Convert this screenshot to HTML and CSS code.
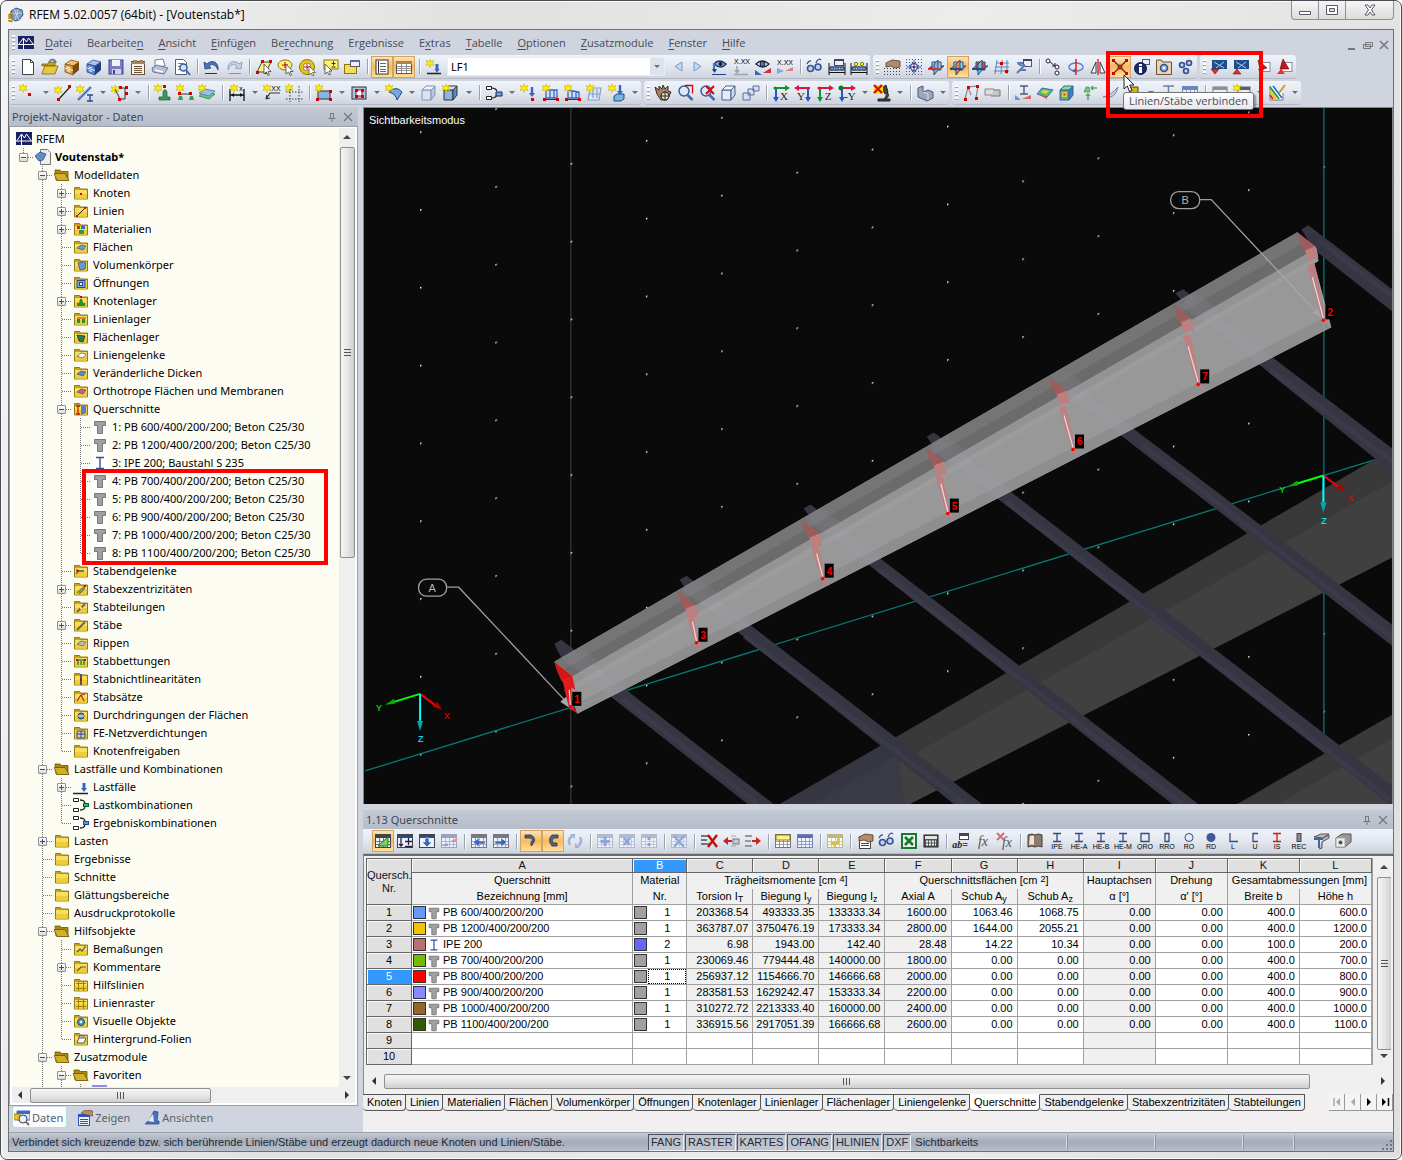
FILE: index.html
```html
<!DOCTYPE html>
<html lang="de">
<head>
<meta charset="utf-8">
<title>RFEM 5.02.0057 (64bit) - [Voutenstab*]</title>
<link rel="stylesheet" href="styles.css">
</head>
<body>
<div class="window">
  <header class="titlebar">
    <svg class="app-icon" viewBox="0 0 16 16"><path d="M3 4l5-3 6 2 1 5-4 5-4 1-4-4z" fill="#7d9cc0" stroke="#3e5878"/><path d="M6 2l5 11M3 7l11-1M10 2L7 13" stroke="#dbe6f2" stroke-width=".7" fill="none"/><text x="0" y="15" font-size="10" font-weight="bold" fill="#d8a800" stroke="#5c4800" stroke-width=".3">5</text></svg>
    <h1>RFEM 5.02.0057 (64bit) - [Voutenstab*]</h1>
    <div class="win-controls">
      <button aria-label="Minimieren"><svg viewBox="0 0 14 12"><path d="M1.500 7.500h11v3h-11z" fill="#fff" stroke="#555b66"/></svg></button>
      <button aria-label="Maximieren"><svg viewBox="0 0 14 12"><path d="M1.500 1.500h11v9h-11z" fill="#fff" stroke="#555b66"/><path d="M4.500 4.500h5v3h-5z" fill="#ddd" stroke="#555b66"/></svg></button>
      <button class="close" aria-label="Schließen"><svg viewBox="0 0 14 12"><path d="M2 1h3l2 3 2-3h3l-3.500 5 3.500 5H9L7 8l-2 3H2l3.500-5z" fill="#fff" stroke="#555b66"/></svg></button>
    </div>
  </header>

  <div class="client">
    <nav class="menubar" aria-label="Menü">
      <span class="grip"></span>
      <svg class="logo" viewBox="0 0 16 13"><path d="M0 0h16v13H0z" fill="#1b2263"/><path d="M0 8.500h16M5.500 2v11M1 8l4.500-6 3 4L10.500 2 15 8" stroke="#fff" fill="none"/></svg>
      <a href="#"><u>D</u>atei</a><a href="#">Bearbeite<u>n</u></a><a href="#"><u>A</u>nsicht</a><a href="#"><u>E</u>infügen</a><a href="#">Be<u>r</u>echnung</a><a href="#">Er<u>g</u>ebnisse</a><a href="#">E<u>x</u>tras</a><a href="#"><u>T</u>abelle</a><a href="#"><u>O</u>ptionen</a><a href="#"><u>Z</u>usatzmodule</a><a href="#"><u>F</u>enster</a><a href="#"><u>H</u>ilfe</a>
      <div class="mdi">
        <button aria-label="Fenster minimieren"><svg viewBox="0 0 10 10"><path d="M1 8h7v2H1z" fill="#777"/></svg></button>
        <button aria-label="Fenster wiederherstellen"><svg viewBox="0 0 10 10"><path d="M2.500 2.500h7v4h-7zM.5 4.500h7v4h-7z" fill="#d0d4de" stroke="#777"/></svg></button>
        <button aria-label="Fenster schließen"><svg viewBox="0 0 10 10"><path d="M1 1l8 8M9 1L1 9" stroke="#777" stroke-width="1.600"/></svg></button>
      </div>
    </nav>
    <div class="toolbars">
      <div class="toolrow" id="row1">
        <div class="toolgroup" data-icons="page open cabo cabb save props print preview | undo redo | selpoly selell selring selbox selwin | *nav *tbl | lf @combo <prev <next eyel xval eyed xdia | glasses mod1 mod2"></div>
        <div class="toolgroup" data-icons="handgrid snap pl1 *pl2 pl3 mesh cfg | copy rot mirr *join info gearbox gears"></div>
        <div class="toolgroup" data-icons="bl1 bl2 rd1 rd2"></div>
      </div>
      <div class="toolrow" id="row2">
        <div class="toolgroup" data-icons="nnode+ nline nmem+ npoly+ | supn supl supf | dim+ dimxx guides | rect+ opening+ shell+ solid solidn+ | combi+ ldn ldl ldm ldf ldv+"></div>
        <div class="toolgroup" data-icons="hand zoomw zoomx cube cubes | vx vy vz vmy+ mic+ | solidg+"></div>
        <div class="toolgroup" data-icons="frame tube | beam surf cubec supg plane starb+ sect tabs | dlg dlgs+ result+"></div>
      </div>
      <div class="tooltip" role="tooltip">Linien/Stäbe verbinden</div>
      <svg class="cursor" viewBox="0 0 12 19"><path d="M1 1v14l3.300-3L6.500 17.500l2.500-1L6.700 11H11z" fill="#fff" stroke="#222"/></svg>
      <div class="mark mark-tool"></div>
    </div>

    <main class="work">
      <aside class="navigator">
        <div class="panel-title"><h2>Projekt-Navigator - Daten</h2>
          <button aria-label="Anheften"><svg viewBox="0 0 10 10"><path d="M3.500 1v5M6.500 1v5M3 1.500h4M1.500 6.500h7M5 7v3" stroke="#777" fill="none"/></svg></button>
          <button aria-label="Schließen"><svg viewBox="0 0 10 10"><path d="M1 1l8 8M9 1L1 9" stroke="#777" stroke-width="1.300"/></svg></button>
        </div>
        <div class="tree-frame">
          <div class="tree-body">
            <ul class="tree" id="tree" role="tree"></ul>
            <div class="vscroll"><i class="up"></i><i class="thumb tree-thumb"></i><i class="down"></i></div>
            <div class="mark mark-tree"></div>
          </div>
          <div class="hscroll"><i class="left"></i><div class="track"><i class="thumb nav-thumb"></i></div><i class="right"></i></div>
        </div>
        <div class="nav-tabs">
          <button class="active"><svg viewBox="0 0 16 16"><path d="M3 1h13v9H3z" fill="#dce9fb" stroke="#3b6cc0"/><path d="M3 1h13v3H3z" fill="#3b6cc0"/><path d="M0 4h6v6H0z" fill="#f0c020" stroke="#907000" stroke-width=".7"/><circle cx="9" cy="9" r="4" fill="#e8f2ff" stroke="#345"/><path d="M12 12l3 3" stroke="#a5622a" stroke-width="2"/></svg>Daten</button>
          <button><svg viewBox="0 0 16 16"><path d="M1.500 4.500h11v11h-11z" fill="#eaf1ff" stroke="#2a55b5"/><path d="M1 4h12v3H1z" fill="#2a55b5"/><path d="M3 9.500h8M3 11.500h8M3 13.500h8" stroke="#2a55b5"/><path d="M4 3l4-3 8 1v5l-6-1z" fill="#b98b62" stroke="#5a4030" stroke-width=".6"/></svg>Zeigen</button>
          <button><svg viewBox="0 0 16 16"><path d="M10 1l4 1-1 9h2v3H1l5-5z" fill="#4a6fc4" stroke="#22418a" stroke-width=".7"/><path d="M9 4l-5 7 6 1z" fill="#e4ecfb"/></svg>Ansichten</button>
        </div>
      </aside>

      <div class="right">
        <section class="viewport" aria-label="Modellansicht">
          <svg viewBox="364 108 1028 695" preserveAspectRatio="xMinYMin slice" id="scene">
            <defs>
              <pattern id="dots" width="75.170" height="77.700" patternUnits="userSpaceOnUse" patternTransform="matrix(1 -.3059 0 1 420 520)"><path d="M0 0h1.400v1.400H0z" fill="#fff"/></pattern>
              <clipPath id="beamShape"><path d="M554 661L1296 232l19 16 2 12-4 3 17 64L577 713l-7-20-8-14z"/></clipPath>
              <linearGradient id="leadB" gradientUnits="userSpaceOnUse" x1="1199" y1="199" x2="1322" y2="320"><stop offset=".5" stop-color="#a0a0a0"/><stop offset=".8" stop-color="#a8a8ac"/><stop offset="1" stop-color="#9c9ca4"/></linearGradient>
            </defs>
            <path d="M364 108h1028v695H364z" fill="#0a0a0a"/>
            <path d="M570.500 108v695" stroke="#303030" stroke-width="1.500"/>
            <path d="M364 108h1028v695H364z" fill="url(#dots)"/>
            <g stroke="#087878" stroke-width="1.300"><path d="M365 770L1374 459"/><path d="M1322.500 108v626"/></g>
            <path d="M780 803L1392 448v108L909 803z" fill="#393939"/>
            <path d="M826 803L1392 480v76L909 803z" fill="#404040"/>
            <path d="M779 803l116-67 4 34 5 33z" fill="#363542"/>
            <path d="M812 803l86-50 1 17 5 33z" fill="#3a3946"/>
            <path d="M1236 803l156-90v90z" fill="#393939"/><path d="M1276 803l116-66v66z" fill="#404040"/>
            <g fill="#363542">
              <path d="M554 643l7-4L773 803h-26L561 657z"/><path d="M679 579l7-4 295 228h-28L688 592z"/><path d="M803 508l7-4 387 299h-26L812 520z"/>
              <path d="M926 436l7-4 459 354v17h-4L935 450z"/><path d="M1050 375l7-4 335 254v21L1062 390z"/><path d="M1174 293l8-4 210 160v24L1186 306z"/><path d="M1300 229l7-4 85 65v22l-80-63z"/>
            </g>
            <g stroke="#3b3a49" stroke-width="5"><path d="M622 698L757 803M744 635L964 803M877 568L1181 803M1005 501L1389 799M1141 444l251 194M1268 369l124 93M1318 241l74 56"/></g>
            <g opacity=".94">
              <path d="M554 661L1296 232l19 16 2 12-4 3 17 64L577 713l-7-20-8-14z" fill="#a1a1a1"/>
              <path d="M554 661L1296 232l19 16L573 675z" fill="#7c7c7c"/>
              <path d="M564 668L1306 240l9 8L573 675z" fill="#727272"/>
              <path d="M573 675L1315 248l2 9L575 685z" fill="#9c9c9c"/>
              <path d="M574 683L1316 256l1 5L575 689z" fill="#a6a6a6"/>
              <path d="M574 704L1322 318l8 9L577 713z" fill="#979797"/>
            </g>
            <g clip-path="url(#beamShape)" fill="none" stroke="#9a9ab4" stroke-width="20" opacity=".13"><path d="M562 645l140 109M688 582l140 108M812 512l140 108M935 440l140 108M1062 380l140 108M1186 298l140 108"/></g>
            <g class="ribs" id="ribs"></g>
            <g fill="none" stroke="#a0a0a0" stroke-width="1.300"><rect x="418.500" y="578.500" width="28" height="17" rx="8"/><path d="M447 586.500h11.500L566 701"/><rect x="1169.500" y="191.500" width="29" height="17" rx="8"/><path d="M1199 199.500h11L1320 317" stroke="url(#leadB)"/></g>
            <path d="M569 707l-9-6 6-5z" fill="#a8a8a8"/><path d="M1320 317l-9-4 5-5z" fill="#a2a2aa"/>
            <g id="nodes"></g>
            <g class="axis-labels" text-anchor="middle"><text x="432" y="591" fill="#b4b4bc">A</text><text x="1184" y="204" fill="#b4b4bc">B</text></g>
            <g id="triads"></g>
            <text x="369" y="124" fill="#fff" font-size="11">Sichtbarkeitsmodus</text>
          </svg>
        </section>

        <section class="sheet-panel">
          <div class="panel-title"><h2>1.13 Querschnitte</h2>
            <button aria-label="Anheften"><svg viewBox="0 0 10 10"><path d="M3.500 1v5M6.500 1v5M3 1.500h4M1.500 6.500h7M5 7v3" stroke="#777" fill="none"/></svg></button>
            <button aria-label="Schließen"><svg viewBox="0 0 10 10"><path d="M1 1l8 8M9 1L1 9" stroke="#777" stroke-width="1.300"/></svg></button>
          </div>
          <div class="toolgroup sheet-tools" data-icons="*g1 g2 g3 g4 | g5 g6 | *g7 *g8 g9 | g10 g11 g12 | g13 | g14 g15 g16 | g17 g18 | g19 | g20 glasses excel calc | abeq fx fxx | book IPE HE-A HE-B HE-M QRO RRO RO RD L U IS REC lib1 lib2"></div>
          <div class="sheet-area">
            <div class="sheet-row">
              <table class="sheet">
                <colgroup><col class="w-no"><col class="w-a"><col class="w-b"><col class="w-c"><col class="w-c"><col class="w-c"><col class="w-c"><col class="w-c"><col class="w-c"><col class="w-i"><col class="w-i"><col class="w-i"><col class="w-i"></colgroup>
                <thead>
                  <tr class="letters"><th rowspan="3" class="corner">Quersch.<br>Nr.</th><th>A</th><th class="sel">B</th><th>C</th><th>D</th><th>E</th><th>F</th><th>G</th><th>H</th><th>I</th><th>J</th><th>K</th><th>L</th></tr>
                  <tr class="names"><th>Querschnitt</th><th>Material</th><th colspan="3">Trägheitsmomente [cm <sup>4</sup>]</th><th colspan="3">Querschnittsflächen [cm <sup>2</sup>]</th><th>Hauptachsen</th><th>Drehung</th><th colspan="2">Gesamtabmessungen [mm]</th></tr>
                  <tr class="names units"><th>Bezeichnung [mm]</th><th>Nr.</th><th>Torsion I<sub>T</sub></th><th>Biegung I<sub>y</sub></th><th>Biegung I<sub>z</sub></th><th>Axial A</th><th>Schub A<sub>y</sub></th><th>Schub A<sub>z</sub></th><th>α [°]</th><th>α' [°]</th><th>Breite b</th><th>Höhe h</th></tr>
                </thead>
                <tbody id="rows"></tbody>
              </table>
              <div class="vscroll"><i class="up"></i><i class="thumb sheet-thumb"></i><i class="down"></i></div>
            </div>
            <div class="hscroll"><i class="left"></i><div class="track"><i class="thumb wide-thumb"></i></div><i class="right"></i></div>
          </div>
          <div class="sheet-tabs">
            <button>Knoten</button><button>Linien</button><button>Materialien</button><button>Flächen</button><button>Volumenkörper</button><button>Öffnungen</button><button>Knotenlager</button><button>Linienlager</button><button>Flächenlager</button><button>Liniengelenke</button><button class="active">Querschnitte</button><button>Stabendgelenke</button><button>Stabexzentrizitäten</button><button>Stabteilungen</button>
            <div class="tab-nav">
              <button aria-label="Erste"><svg viewBox="0 0 10 10"><path d="M2 1v8" stroke="#aaa" stroke-width="1.500"/><path d="M8 1v8L4 5z" fill="#aaa"/></svg></button><button aria-label="Zurück"><svg viewBox="0 0 10 10"><path d="M7 1v8L3 5z" fill="#aaa"/></svg></button><button aria-label="Weiter"><svg viewBox="0 0 10 10"><path d="M3 1v8l4-4z"/></svg></button><button aria-label="Letzte"><svg viewBox="0 0 10 10"><path d="M8.500 1v8" stroke="#000" stroke-width="1.500"/><path d="M2 1v8l4-4z"/></svg></button>
            </div>
          </div>
        </section>
      </div>
    </main>

    <footer class="statusbar">
      <p class="hint">Verbindet sich kreuzende bzw. sich berührende Linien/Stäbe und erzeugt dadurch neue Knoten und Linien/Stäbe.</p>
      <button>FANG</button><button>RASTER</button><button>KARTES</button><button>OFANG</button><button>HLINIEN</button><button>DXF</button>
      <span class="mode">Sichtbarkeits</span><span class="slot"></span><span class="slot"></span><span class="slot slot-small"></span><span class="slot"></span>
      <svg class="resize" viewBox="0 0 10 10"><path d="M8 0h2v2H8zM8 4h2v2H8zM4 4h2v2H4zM8 8h2v2H8zM4 8h2v2H4zM0 8h2v2H0z" fill="#6d7480"/></svg>
    </footer>
  </div>
</div>
<script src="app.js"></script>
</body>
</html>
```
FILE: styles.css
```css
* { box-sizing: border-box; }
body { margin: 0; font: 11px/16px "Liberation Sans", Arial, sans-serif; color: #000; background: #fff; }
button { margin: 0; padding: 0; border: 0; background: none; font: inherit; color: inherit; }
h1, h2, p, ul { margin: 0; padding: 0; font-weight: normal; }
svg { display: block; flex: none; }

.window { display: flex; flex-direction: column; height: 100vh; min-height: 700px; padding: 0 7px 7px; border: 1px solid #4a4e54; border-radius: 7px; background: linear-gradient(100deg, #f4f4f4, #e2e0e0 30%, #ececec 60%, #dfdfdf); box-shadow: inset 0 0 0 1px #fafafa; overflow: hidden; }
.titlebar { display: flex; align-items: center; height: 28px; flex: none; gap: 5px; }
.titlebar h1 { flex: 1; font: 12px/28px "Open Sans", "Noto Sans", sans-serif; }
.app-icon { width: 16px; height: 16px; }
.win-controls { display: flex; align-self: flex-start; height: 19px; border: 1px solid #8a8e96; border-top: 0; border-radius: 0 0 4px 4px; background: linear-gradient(#f6f6f6, #dcdcdc); }
.win-controls button { display: grid; place-items: center; width: 27px; border-right: 1px solid #8a8e96; }
.win-controls .close { width: 47px; border-right: 0; }
.win-controls svg { width: 14px; height: 12px; }

.client { display: flex; flex-direction: column; flex: 1; min-height: 0; border: 1px solid #6c7178; background: #d0d4de; }
.menubar { display: flex; align-items: center; height: 25px; flex: none; font: 11px/16px "Open Sans", "Noto Sans", sans-serif; color: #444b57; }
.menubar a { color: inherit; text-decoration: none; margin-right: 15px; white-space: nowrap; }
.menubar u { text-underline-offset: 2px; }
.menubar .logo { width: 16px; height: 13px; margin: 0 11px 0 1px; }
.mdi { display: flex; gap: 6px; margin-left: auto; padding: 4px 4px 0 0; }
.mdi svg { width: 10px; height: 10px; }

.grip { width: 3px; height: 16px; margin: 0 2px 0 3px; flex: none; background: repeating-linear-gradient(#fff 0 2px, #9aa0ac 2px 3px, transparent 3px 4px); }
.toolbars { position: relative; display: flex; flex-direction: column; gap: 2px; flex: none; padding-bottom: 2px; }
.toolrow { display: flex; gap: 3px; height: 24px; }
.toolgroup { display: flex; align-items: center; flex: none; height: 24px; border-radius: 3px; background: linear-gradient(#f0f3f9, #e2e7f0 50%, #cfd3dd); border-bottom: 1px solid #b4b9c4; }
.tool { display: grid; place-items: center; flex: none; width: 22px; height: 22px; border: 1px solid transparent; }
.tool svg { width: 18px; height: 18px; }
.tool.slim { width: 20px; }
.tool.on { border-color: #cfa566; background: linear-gradient(#fde3b5, #fbb75e 50%, #fde09a); }
.drop { width: 13px; height: 20px; flex: none; display: grid; place-items: center; }
.drop::after, .combo::after { content: ""; border: 3px solid transparent; border-top-color: #6a6f78; border-bottom: 0; }
.sep { width: 1px; height: 15px; margin: 0 3px 0 4px; background: #9ba1ad; box-shadow: 1px 0 #fff; flex: none; }
.combo { position: relative; width: 218px; height: 19px; margin: 0 3px 0 2px; flex: none; }
.combo select { width: 100%; height: 100%; border: 1px solid #e8ecf4; background: #fff; appearance: none; padding: 0 3px; font: 11px "Noto Sans", sans-serif; color: #000; }
.combo::before { content: ""; position: absolute; right: 1px; top: 1px; width: 14px; height: 17px; background: #dde2ec; }
.combo::after { position: absolute; right: 5px; top: 8px; }

.tooltip { position: absolute; left: 1114px; top: 37px; padding: 0 5px; border: 1px solid #767676; border-radius: 3px; background: linear-gradient(#fff, #e6e8f2); font: 11px/16px "Open Sans", "Noto Sans", sans-serif; color: #4c4c4c; box-shadow: 2px 2px 2px #0005; white-space: nowrap; }
.cursor { position: absolute; left: 1114px; top: 19px; width: 12px; height: 19px; }
.mark { position: absolute; border: 4px solid #f00; pointer-events: none; }
.mark-tool { left: 1097px; top: -4px; width: 157px; height: 67px; z-index: 2; }
.mark-tree { left: 70px; top: 341px; width: 246px; height: 96px; }

.work { display: flex; gap: 5px; flex: 1; min-height: 0; }
.navigator { display: flex; flex-direction: column; flex: 0 0 349px; min-height: 0; }
.panel-title { display: flex; align-items: center; gap: 6px; height: 19px; flex: none; padding: 0 5px 0 3px; background: linear-gradient(#c4cad4, #b6bdc9); }
.panel-title h2 { flex: 1; font: 11px/18px "Noto Sans", "Open Sans", sans-serif; color: #3f4650; }
.panel-title svg { width: 10px; height: 10px; }
.tree-frame { flex: 1; min-height: 0; display: flex; flex-direction: column; padding: 1px 2px 2px; border: 1px solid #9aa0aa; background: #fff; }
.tree-body { position: relative; flex: 1; min-height: 0; display: flex; background: #fcfcf3; }
.tree { flex: 1; list-style: none; padding: 2px 0 0 2px; overflow: hidden; font: 11px/18px "Noto Sans", "Open Sans", sans-serif; }
.tree li { display: flex; align-items: center; height: 18px; white-space: nowrap; }
.tree li.bold { font-weight: bold; }
.tree .icon { width: 16px; height: 16px; margin: 0 4px 0 2px; }
.tree .white { background: #fff; }
.g { position: relative; width: 19px; height: 18px; flex: none; background-repeat: no-repeat; }
.g.line { background-image: repeating-linear-gradient(#777 0 1px, transparent 1px 2px); background-size: 1px 18px; background-position: 9px 0; }
.g.half { background-image: repeating-linear-gradient(#777 0 1px, transparent 1px 2px); background-size: 1px 10px; background-position: 9px 0; }
.g.elbow::before { content: ""; position: absolute; left: 10px; top: 9px; width: 9px; height: 1px; background: repeating-linear-gradient(90deg, #777 0 1px, transparent 1px 2px); }
.box { position: absolute; left: 5px; top: 5px; width: 9px; height: 9px; border: 1px solid #919191; border-radius: 1px; background: linear-gradient(90deg, #2e4c9c, #2e4c9c) center / 5px 1px no-repeat, linear-gradient(#fff, #dcdcdc); }
.box.plus { background: linear-gradient(#2e4c9c, #2e4c9c) center / 5px 1px no-repeat, linear-gradient(#2e4c9c, #2e4c9c) center / 1px 5px no-repeat, linear-gradient(#fff, #dcdcdc); }

.vscroll { position: relative; display: flex; flex-direction: column; align-items: center; width: 16px; flex: none; background: #efeff0; padding: 7px 0; }
.vscroll i, .hscroll i { display: block; flex: none; }
.up { border: 4px solid transparent; border-bottom-color: #444; border-top: 0; }
.down { border: 4px solid transparent; border-top-color: #444; border-bottom: 0; margin-top: auto; }
.left { border: 4px solid transparent; border-right-color: #333; border-left: 0; }
.hscroll .right { border: 4px solid transparent; border-left-color: #333; border-right: 0; }
.thumb { position: relative; border: 1px solid #8f8f92; border-radius: 2px; background: linear-gradient(90deg, #f5f5f5, #e6e6e7 50%, #cfcfd2); }
.vscroll .thumb { width: 15px; margin-top: 8px; }
.tree-thumb { height: 411px; }
.sheet-thumb { height: 173px; }
.thumb::after { content: ""; position: absolute; left: 3px; top: 50%; width: 7px; height: 7px; margin-top: -4px; background: repeating-linear-gradient(#555 0 1px, transparent 1px 3px); }
.hscroll { display: flex; align-items: center; height: 16px; flex: none; padding: 0 6px; background: #efeff0; }
.track { flex: 1; margin: 0 12px 0 8px; }
.hscroll .thumb { height: 15px; background: linear-gradient(#f5f5f5, #e6e6e7 50%, #cfcfd2); }
.hscroll .thumb::after { left: 50%; top: 3px; margin: 0 0 0 -4px; width: 8px; background: repeating-linear-gradient(90deg, #555 0 1px, transparent 1px 3px); }
.nav-thumb { width: 181px; }
.wide-thumb { width: 94%; }
.nav-tabs { display: flex; gap: 8px; height: 26px; flex: none; padding: 1px 0 4px 3px; font: 11px/16px "Noto Sans", "Open Sans", sans-serif; color: #59606c; }
.nav-tabs button { display: flex; align-items: center; gap: 2px; padding: 0 3px 0 1px; border: 1px solid transparent; border-radius: 3px; }
.nav-tabs .active { background: #fafbfd; border-color: #b7dde0; border-top-color: #fff; }
.nav-tabs svg { width: 16px; height: 16px; }

div.right { display: flex; flex-direction: column; flex: 1; min-width: 0; }
.viewport { flex: 1; min-height: 0; border: 1px solid #82868e; border-width: 1px 1px 0; background: #0a0a0a; overflow: hidden; }
.viewport svg { width: 100%; height: 100%; }
.viewport .node-label { font-weight: bold; font-size: 10px; fill: #f00; }
.sheet-panel { flex: none; margin-top: 6px; padding-bottom: 21px; background: #f1efef; }
.sheet-tools { padding-left: 9px; border-radius: 0; height: 25px; }
.tool text { font: 7px "Liberation Sans", Arial, sans-serif; text-anchor: middle; fill: #000; }
.tool text.big { font: italic 14px "Liberation Serif", serif; fill: #555; }
.tool text.mid { font: bold italic 10px "Liberation Serif", serif; fill: #222; }
.tool text.view { font: 11px "Liberation Serif", serif; fill: #223; }
.sheet-area { border-top: 2px solid #6a6a6a; border-left: 1px solid #8a8a8a; background: #f0f0f0; padding: 2px 2px 5px; }
.sheet-row { display: flex; gap: 3px; overflow: hidden; margin-bottom: 8px; }
.sheet { flex: none; width: 1007px; table-layout: fixed; border-collapse: separate; border-spacing: 0; border-right: 1px solid #a0a0a0; }
.w-no { width: 46px; } .w-a { width: 221px; } .w-b { width: 54px; } .w-c { width: 66px; } .w-i { width: 72px; }
.sheet th, .sheet td { height: 16px; padding: 0; font-weight: normal; line-height: 15px; white-space: nowrap; }
.sheet .letters th { height: 15px; line-height: 13px; background: #e0e0e0; border: 1px solid #666; border-width: 1px 1px 1px 0; box-shadow: inset 1px 1px #f8f8f8; color: #112; }
.sheet .letters .sel { background: #3399ff; color: #fff; }
.sheet .letters .corner { border-left: 1px solid #666; line-height: 13px; }
.sheet .names th { background: #f0f0f0; border-right: 1px solid #a0a0a0; line-height: 14px; vertical-align: top; }
.sheet .units th { border-bottom: 1px solid #a0a0a0; }
.sheet sup, .sheet sub { font-size: 9px; line-height: 0; }
.sheet sup { vertical-align: 2px; }
.sheet sub { vertical-align: -2px; }
.sheet tbody th { background: #e0e0e0; border: 1px solid #666; border-top: 0; box-shadow: inset 1px 1px #fafafa; }
.sheet tbody th.sel { background: #3399ff; color: #fff; }
.sheet td { background: #fff; border-right: 1px solid #a0a0a0; border-bottom: 1px solid #a0a0a0; text-align: right; padding-right: 4px; }
.sheet td.calc { background: #f0f0f0; }
.sheet td.name, .sheet td.mat { padding: 0; }
.cell { display: flex; align-items: center; height: 15px; }
.cell i { width: 13px; height: 13px; margin: 0 1px; border: 1px solid #333; flex: none; }
.cell svg { width: 14px; height: 14px; margin-right: 2px; }
.cell span { flex: 1; text-align: left; }
.mat .cell span { text-align: center; height: 15px; }
.mat .cell .focus { outline: 1px dotted #000; outline-offset: -1px; }

.sheet-tabs { display: flex; height: 17px; }
.sheet-tabs > button { border: 1px solid #555; border-left: 0; border-radius: 0 0 4px 4px; background: #efefef; padding: 0 3px 0 4px; line-height: 15px; white-space: nowrap; }
.sheet-tabs > .active { background: #fff; border-top-color: #fff; }
.tab-nav { display: flex; margin-left: auto; }
.tab-nav button { display: grid; place-items: center; width: 16px; border: 1px solid #999; border-width: 0 1px 1px 0; background: #f4f4f4; }
.tab-nav svg { width: 10px; height: 10px; }

.statusbar { display: flex; align-items: center; gap: 1px; height: 19px; flex: none; border-top: 1px solid #9aa0ab; background: linear-gradient(#c6cad2, #a4abb8 50%, #b9bec9); color: #222b3a; }
.statusbar .hint { width: 638px; flex: none; padding-left: 3px; line-height: 18px; white-space: nowrap; }
.statusbar button { height: 17px; padding: 0 2px; border: 1px solid #eef0f4; border-top-color: #4a505c; border-left-color: #4a505c; background: #c0c4cd; line-height: 14px; }
.statusbar .mode { flex: 1; padding-left: 3px; }
.slot { width: 87px; height: 15px; border-left: 1px solid #8d94a0; box-shadow: -1px 0 #d8dbe2; }
.slot-small { width: 50px; }
.resize { width: 10px; height: 10px; align-self: flex-end; margin: 0 1px 1px 0; }
```
FILE: app.js
```js
// Small SVG drawing helpers; every tool icon is drawn on an 18 x 18 grid.
const P = (d, fill = 'none', stroke = 'none', w = 1) => `<path d="${d}" fill="${fill}" stroke="${stroke}" stroke-width="${w}"/>`;
const R = (x, y, w, h, fill, stroke = 'none') => `<rect x="${x}" y="${y}" width="${w}" height="${h}" fill="${fill}" stroke="${stroke}"/>`;
const C = (x, y, r, fill, stroke = 'none', w = 1) => `<circle cx="${x}" cy="${y}" r="${r}" fill="${fill}" stroke="${stroke}" stroke-width="${w}"/>`;
const T = (x, y, s, cls = '') => `<text x="${x}" y="${y}" class="${cls}">${s}</text>`;
const N = (...pts) => pts.map(([x, y]) => R(x, y, 3, 3, '#d40000')).join('');
const starAt = (x, y) => P(`M${x + 4} ${y}l1 2.500 3-1-1.500 2.500 1.500 2.500-3-.8-1 2.800-1-2.800-3 .8 1.500-2.500-1.500-2.500 3 1z`, '#fff000', '#c0a400', .5);
const star = starAt(0, 0);
const cur = P('M9 6v10l2.500-2 1.500 3.500 1.500-.7-1.500-3.300h3z', '#fff', '#444', .8);
const dd = '#27488c';
const grid = (c = '#777', body = '#eef2fa') => R(1.5, 2.5, 15, 13, body, c) + P('M1 3h16v3H1z', c) + P('M1 9.500h16M1 12.500h16M5.500 3v13M9.500 3v13M13.500 3v13', 'none', c, .7);
const cab = (a, b, c) => P('M2 6l6-4 8 2-6 4z', a, c, .7) + P('M10 8l6-4v8l-6 5z', c) + P('M2 6l8 2v9l-8-3z', b, c, .7) + P('M2 10l8 2.500M4 9l3 1M4 12.500l3 1', 'none', '#fff', .9);
const planes = (hot) => P('M1 11l4-3h12l-4 3z', hot === 0 ? '#e03020' : '#a9cbe8', '#20507c') + P('M5 4h9v8H5z', hot === 2 ? '#e84040' : '#a9cbe8', '#20507c') + P('M7 6l4-4v10l-4 5z', hot === 1 ? '#ef7c5a' : '#7db3de', '#20507c') + P('M1 11h12', 'none', hot === 0 ? '#e03020' : '#20507c', 2);
const mag = C(8, 7, 5, '#dbe8fa', '#3c5c98', 1.5) + P('M11.500 11l5 5', 'none', '#4468b0', 2.5);
const cube = (a, b, c, s) => P('M2 6h9v10H2z', a, s) + P('M2 6l4-4h9l-4 4z', b, s) + P('M11 6l4-4v9l-4 5z', c, s);
const glass = P('M1 6c2-4 3-3 4-3M10 5c2-5 4-4 5-3', 'none', '#39538f', 1.3) + C(4.5, 10.5, 3, '#bcd0f0', '#39538f', 1.6) + C(12, 9, 3, '#bcd0f0', '#39538f', 1.6);
const hand = P('M3 5l6-3 8 1v6l-5 1-4-2-5 1z', '#b58a66', '#4d3a2c', .8);
const truss = P('M1 14.500h16M2 9h14v3H2z', '#cfe0f8', '#111') + C(4, 10.5, 1.6, '#7aa6e8', dd) + C(9, 10.5, 1.6, '#7aa6e8', dd) + C(14, 10.5, 1.6, '#7aa6e8', dd) + P('M1 5v12M17 5v12', 'none', '#111');
const eye = P('M2 6q6-6 13 0q-6 6-13 0z', '#fff', '#223', 1.3) + C(8.5, 6, 2.5, '#3c74c8', '#123');
const view = (s, a, b, c) => P('M3 4h11', 'none', a, 1.8) + P('M13 1l5 3-5 3z', a) + P('M4 5v9', 'none', b, 2) + P('M1 13l3 5 3-5z', b) + T(12, 16, s, 'view') + C(3, 4, 1.5, c);
const boxes = P('M1.500 2.500h5v3h-5zM1.500 12.500h5v3h-5z', '#fff', '#222') + P('M7 4c3 0 4 1 5 3M7 14c3 0 4-1 5-3', 'none', '#222', 1.2);
const prof = (shape, label, c = '#3a4a80') => P(shape, 'none', c, 1.3) + T(9, 17, label);
const gear = (x, y, r) => C(x, y, r, '#9db8e4', '#39538f', 1.6) + C(x, y, r / 3, '#fff');
const smallI = 'M5 1.500h8M9 1.500v8M5 9.500h8';

const ICONS = {
  page: P('M3.500 1.500h8l3 3v12h-11z', '#fff', '#444') + P('M11.500 1.500v3h3', 'none', '#444'),
  open: P('M1 6h6l1-2h6v4H1z', '#c9a020', '#6d5600', .7) + P('M1 15L4 8h13l-3 8H1z', '#e8c840', '#6d5600', .7) + P('M8 4c2-4 6-3 7 1', 'none', '#4a74b0', 1.6),
  cabo: cab('#f2bd70', '#e0a04a', '#7a4a10'), cabb: cab('#a9c4f0', '#5f88d4', '#203e80'),
  save: R(2, 2, 14, 14, '#7c7cc4', '#44448c') + R(5, 2, 8, 6, '#f2f2fa') + R(5, 11, 9, 5, '#d0d0e8') + R(6, 12, 2, 4, '#44448c'),
  props: R(2.5, 3.5, 13, 13, '#fff4df', '#6b5138') + P('M2 4h2V2h4v2h2V2h4v2h2v2H2z', '#a6835b') + P('M5 8.500h8M5 10.500h8M5 12.500h8M5 14.500h8', 'none', '#6b5138'),
  print: P('M4 9V2l8-1 2 7z', '#fff', '#55617c', .8) + P('M1 10l5-3 11 3-4 6-11-2z', '#b6bedc', '#55617c', .8) + P('M4 12l8 2', 'none', '#fff', 1.5),
  preview: P('M2.500 1.500h8l3 3v12h-11z', '#fff', '#55617c') + P('M5 5.500h5M5 8.500h3M5 11.500h3', 'none', '#778') + C(10.5, 9.5, 3.5, '#cfe2fa', '#3c5c98', 1.4) + P('M13 12l4 5', 'none', '#4468b0', 2),
  undo: P('M1 4l1 7 6-1-2-2c3-3 7-1 9 4 1-8-6-11-11-6z', '#4e74bc', '#203e70', .8) + P('M2 15.500h12', 'none', '#334'),
  redo: P('M17 4l-1 7-6-1 2-2c-3-3-7-1-9 4-1-8 6-11 11-6z', '#c4d0e6', '#8296ba', .8) + P('M4 15.500h12', 'none', '#8890a0'),
  selpoly: P('M2 14L7 4h9l-5 10z', '#fff27a', '#444') + N([1, 13], [6, 2], [14, 2], [9, 13]) + cur,
  selell: '<ellipse cx="8" cy="7" rx="7" ry="5" fill="#fff27a" stroke="#8a7600"/>' + P('M8 4v6M5 7h6', 'none', '#d00') + cur,
  selring: C(8, 9, 6, '#fff', '#e8c800', 3) + C(8, 9, 7.5, 'none', '#776000', .8) + C(8, 9, 4, 'none', '#776000', .8) + P('M8 6v6M5 9h6', 'none', '#d00') + P('M10 8v9l2-2 1.500 3 1.500-.7-1.500-2.800h3z', '#fff', '#444', .7),
  selbox: R(3, 2, 14, 9, '#fff27a', '#8a7600') + P('M12.500 3.500v4M10.500 5.500h4M10.500 9h4', 'none', '#333') + P('M4 6v10l2.500-2 1.500 3 1.500-.7L8 13h3z', '#fff', '#444', .8),
  selwin: R(1.5, 6.5, 12, 9, '#f6dc58', '#8a7600') + R(7.5, 2.5, 9, 6, '#eef2fc', '#556') + P('M7 2h10v2H7z', '#6068a8'),
  nav: R(3, 2, 12, 14, '#fff', '#333') + P('M5.500 3v12', 'none', '#333') + P('M7 5.500h6M7 8.500h6M7 11.500h6M7 13.500h6', 'none', '#666'),
  tbl: R(1.5, 3.5, 15, 12, '#fff', '#555') + P('M1 3h16v3H1z', '#b98040') + P('M2 8.500h14M2 10.500h14M2 12.500h14M6.500 6v9M11.500 6v9', 'none', '#777', .8),
  lf: starAt(1, 1) + P('M2 15.500h14', 'none', '#222', 1.3) + P('M12 6v6', 'none', '#3a66c0', 3) + P('M9.500 11h5l-2.500 4z', '#3a66c0'),
  prev: P('M13 4v9L6 8.500z', '#c6d6f4', '#7a96d0'), next: P('M5 4v9l7-4.500z', '#c6d6f4', '#7a96d0'),
  eyel: P('M4 6q5-6 12 0q-5 6-12 0z', '#8fb0e4', '#203866', 1.6) + C(10.5, 6, 2, '#123') + P('M4 5v8', 'none', '#4a74c0', 2.2) + P('M2 11h5l-2.500 4zM2 16h14v1H2z', '#223f80'),
  xval: T(10, 6, 'X.XX') + P('M5 8v6M2 16.500h14', 'none', '#9aa4b8', 1.5) + P('M2 12h6l-3 4z', '#9aa4b8'),
  eyed: eye + P('M9 15h8v-5z', '#d03040') + P('M1 12v5h7z', '#3a66c0'),
  xdia: T(9, 7, 'X.XX') + P('M9 13h8v-4z', '#e08088') + P('M1 10v6l7-3z', '#8ca4d8'),
  glasses: glass, mod1: truss + R(6.5, 1.5, 9, 6, '#eef', '#446') + P('M6 1h10v2H6z', '#446'), mod2: truss + C(6, 6, 1.7, '#ff0', '#770') + C(12, 6, 1.7, '#ff0', '#770'),
  handgrid: [10, 13, 16].map(y => [1, 4, 7, 10, 13, 16].map(x => R(x, y, 1, 1, '#444')).join('')).join('') + hand,
  snap: [1, 4, 7, 10, 13, 16].map(y => [1, 4, 7, 10, 13, 16].map(x => R(x, y, 1, 1, '#556')).join('')).join('') + C(9, 9, 3.5, '#fff', '#2a50b0', 1.3) + P('M9 2v14M2 9h14', 'none', '#2a50b0') + C(9, 9, 1.3, '#d00'),
  pl1: planes(0), pl2: planes(1), pl3: planes(2),
  mesh: P('M4 2l-2 14M9 2L8 16M14 2v14M3 5h13M2 9h14M1 13h15', 'none', '#5a86b8') + N([7, 4], [12, 12]),
  cfg: R(8.5, 1.5, 8, 7, '#eef', '#556') + P('M8 1h9v2H8z', '#446') + P('M3 4c0 3 4 4 7 3M10 7l-8 8M3 5h5M6 12h5', 'none', '#5a7cb4', 2),
  copy: C(3, 3, 2, '#fff', '#223') + C(12, 9, 2, '#fff', '#223') + C(12, 15, 2, '#fff', '#223') + P('M5 4l5 4M10 5v3H7', 'none', '#223'),
  rot: '<ellipse cx="9" cy="9" rx="7" ry="4" fill="none" stroke="#5a84cc" stroke-width="1.500"/>' + P('M9 1v16', 'none', '#e00', 1.3) + P('M9 10v5l-4-2z', '#3e66b4'),
  mirr: P('M2 15L7 4v11zM16 15L11 4v11z', '#fff', '#334') + P('M9 1v16', 'none', '#e00', 1.2),
  join: P('M2 2l14 14M16 2L2 16', 'none', '#4b3018', 1.4) + N([1, 1], [14, 1], [1, 14], [14, 14]) + C(9, 9, 2, '#e03010', '#7a1000'),
  info: R(9.5, 1.5, 7, 5, '#eef', '#556') + C(7.5, 10.5, 6, '#1c2a68', '#0d1644') + P('M6 9h3v6H6zM6 6h3v2H6z', '#fff'),
  gearbox: P('M1.500 4V2h5l1 2h9v12.500h-15z', '#e8d4b4', '#6b5138') + gear(9, 10, 3.5),
  gears: gear(5, 7, 2.5) + gear(12, 5, 2.5) + gear(9, 13, 2.5),
  bl1: P('M2 2h15v9H2z', '#1e4f8c') + P('M4 4l10 6M14 4L6 10', 'none', '#a8d0f4') + P('M1 11h8l-4 5z', '#e03028', '#800', .6),
  bl2: P('M2 2h15v9H2z', '#1e4f8c') + P('M4 4l10 6M14 4L6 10', 'none', '#a8d0f4') + P('M1 16h8l-4-5z', '#e03028', '#800', .6),
  rd1: R(6, 4.5, 10, 9, '#fff', '#889') + P('M4 2l9 8-7 2z', '#c01820', '#700', .6) + P('M4 11h6l-3 5z', '#c01820'),
  rd2: R(6, 4.5, 10, 9, '#fff', '#889') + P('M7 1l6 10H4z', '#c01820', '#700', .6) + P('M1 16h8l-4-5z', '#e03028'),
  nnode: star + N([9, 9]), nline: starAt(0, 2) + P('M4 16L16 3', 'none', '#222', 1.2) + N([14, 1], [3, 14]),
  nmem: starAt(0, 1) + P('M2 16L15 3', 'none', '#7aa0d8', 3) + P('M2 16L15 3', 'none', '#456') + P('M11 11h6M14 11v6M11 17h6', 'none', dd, 1.3),
  npoly: starAt(0, 1) + P('M4 5l5 10h5V4H9', 'none', '#333') + N([8, 2], [14, 2], [14, 8], [7, 14]),
  supn: star + N([9, 1]) + P('M9 8c1-3 3-3 4 0v5h3v3H5v-3h4z', '#3b9a58', '#1c5c30', .7),
  supl: star + P('M4 10h10', 'none', '#333') + N([2, 8], [13, 8]) + P('M3 12h3l1 4H2zM14 12h3l1 4h-5z', '#3b9a58'),
  supf: P('M1 12l6-4 10 2-6 5z', '#6ec080', '#3b9a58') + P('M1 9l6-4 10 2-6 5z', '#9cc0ec', '#5a86b8') + star,
  dim: P('M2 5v12M16 5v12M2 11h14', 'none', '#111', 1.3) + P('M3 11l3-2v4zM15 11l-3-2v4z', '#111') + starAt(2, 0) + T(13, 7, 'x'),
  dimxx: star + T(13, 7, 'XX') + P('M3 15L7 9h10M3 15l1-4M3 15l4-1', 'none', '#333', 1.2),
  guides: star + '<path d="M5 5v13M14 2v16M1 8h17M1 15h17" stroke="#444" stroke-dasharray="1.500 1.500"/>',
  rect: R(3, 7, 12, 8, '#8ab4e4', '#333') + N([1, 14], [14, 14], [14, 6]) + star,
  opening: R(2, 3, 14, 12, '#a9c7ea', '#333') + R(6, 6, 6, 6, '#fff', '#c00') + N([5, 5], [11, 5], [5, 11], [11, 11]),
  shell: P('M4 8q7-7 13 0l-5 8q-1-6-8-8z', '#7ba7e0', '#204880') + star,
  solid: cube('#dbe3f2', '#eef2fa', '#b9c6de', '#8694ae'), solidn: cube('#8ab4e4', '#cfe0f6', '#5f8cc8', '#333') + star,
  combi: boxes + P('M11 8h6v4h-6z', '#6aa4f0', '#224'), ldn: star + P('M12 3v8', 'none', '#3a66c0', 2.4) + P('M9 9h6l-3 4z', '#3a66c0') + N([11, 14]),
  ldl: P('M4 6h11v8H4zM8 6v8M12 6v8', '#cfe0f8', '#3a66c0', 1.3) + star + P('M2 15.500h14', 'none', '#333') + N([1, 14], [14, 14]),
  ldm: P('M4 6l11 2v6H4zM8 6v8M12 7v7', '#cfe0f8', '#3a66c0', 1.3) + star + P('M2 15.500h14', 'none', '#333') + N([1, 14], [14, 14]),
  ldf: P('M4 4h11l-2 12H2zM7 5v9M11 5v9M3 10h11', '#dbe6f6', '#86a0c8', 1.2) + star,
  ldv: star + P('M12 1v7', 'none', '#3a66c0', 2.4) + P('M9 7h6l-3 4z', '#3a66c0') + P('M6 12l3-2h7v5l-3 2H6z', '#78b4dc', '#1c5080'),
  hand: P('M1 3l4 3V2l3 3 1-4 2 4 3-3v5l3 1-4 8H7L3 10z', '#a08068', '#3a2c20') + C(11, 12, 4, '#e0d8c0', '#333') + P('M11 7v10M6 12h10', 'none', '#333'),
  zoomw: mag + P('M9 1.500h7.500v8', 'none', '#d00', 1.3), zoomx: mag + P('M8 2l8 8M16 2l-8 8', 'none', '#d01010', 2.2),
  cube: cube('#e4ecfa', '#f4f8ff', '#cddaf0', '#4a5c8c'), cubes: P('M1 9h7v7H1zM6 5h6v6H6zM11 2h6v5h-6z', '#d5e0f4', '#5a6c9c'),
  vx: view('X', '#0a9a20', '#2454d0', '#0a9a20'), vy: P('M16 4H3', 'none', '#e01040', 1.8) + P('M5 1L0 4l5 3z', '#e01040') + P('M14 5v9', 'none', '#2454d0', 2) + P('M11 13l3 5 3-5z', '#2454d0') + T(7, 16, 'Y', 'view'),
  vz: view('Z', '#e01040', '#0a9a20', '#e01040'), vmy: view('-Y', '#e01040', '#2454d0', '#0a7a20') + C(3, 4, 2.5, '#0a7a20'),
  mic: P('M5 15h12v2H5zM9 4l4-3 2 7-3 2zM14 8c3 3 1 7-3 7', '#444', '#222') + R(1, 1, 9, 9, '#ffe800') + P('M1 1l8 8M9 1L1 9', 'none', '#d01010', 2.4),
  solidg: P('M2 4l5-2v6l5-2 5 2v6l-6 3-9-4z', '#9aa8bc', '#4a5a74') + P('M7 8l5 2v6', 'none', '#dde'),
  frame: P('M3 15L6 3l10-1-2 12M6 3l3 8', 'none', '#888', 1.2) + N([2, 14], [5, 2], [14, 1], [13, 13]),
  tube: P('M1 5h9v6H1z', '#ddd', '#888') + P('M10 6h6v6h-9', '#c8c8c8', '#777'),
  beam: P('M6 2h8M10 2v8M6 10h8', 'none', '#4a5a80', 1.4) + P('M1 11v5h6z', '#6c93cf') + P('M8 15h9v-4z', '#e06060'),
  surf: P('M1 10l5-6 11 2-6 7z', '#58c070', '#3868c0') + P('M5 8l3-2 5 1-3 3z', '#f0d040') + P('M1 10l10 3v2z', '#d05050'),
  cubec: cube('#48b8a0', '#8cd8a0', '#4878d0', '#2a6a80') + P('M4 8h5v5H4z', '#f0c040') + R(5.5, 9.5, 2, 2, '#e04030'),
  supg: P('M6 3h3l1 5H4z', '#7cc088', '#4a9458', .7) + P('M11 4h6M11 4l2-2M11 4l2 2M8 16v-6M6 12l2-2 2 2', 'none', '#5aa468', 1.5),
  plane: P('M1 13q7-1 15-10-2 9-8 10z', '#c4cede', '#7a88a4'), starb: P('M6 3h8v6H6z', '#d8b400', '#443') + starAt(1, 7),
  sect: P('M4 2h11M9.500 2v12M5 14h9', 'none', '#6a80b0', 1.5), tabs: grid('#6c86bc', '#eef'), dlg: R(2, 3, 14, 12, '#f0f0f4', '#777') + P('M2 3h14v3H2z', '#8890a4') + P('M4 9.500h5M4 12.500h8', 'none', '#b66'),
  dlgs: R(5, 3, 12, 10, '#f0f0f4', '#667') + P('M5 3h12v3H5z', '#505c84') + star,
  result: P('M2 2v14h13V9', '#fff', '#777') + P('M2 3l9 12', 'none', '#20a040', 2) + P('M2 7l6 8', 'none', '#f0c000', 2) + P('M2 11l3 4', 'none', '#e02020', 2) + P('M5 2l9 12', 'none', '#2060e0', 1.6) + P('M17 1l-6 8', 'none', '#c89a30', 2),
  g1: grid('#444') + P('M4 14L14 5v9z', '#7cd060', '#208020'), g2: R(1.5, 2.5, 15, 13, '#eef2fa', '#444') + P('M1 3h16v3H1z', dd) + P('M9 9.500h7M12.500 6v7M5 6v8M3 12l2 2 2-2M9 14.500h7', 'none', '#224', 1.3),
  g3: R(1.5, 2.5, 15, 13, '#eef2fa', '#444') + P('M1 3h16v3H1z', dd) + P('M7 6h4v4h3l-5 5-5-5h3z', '#3a66c0', '#fff', .6),
  g4: grid('#98a4c0') + P('M1 14l7-3v3z', '#8ca4d8') + P('M9 10l8-4v4z', '#e09090'), g5: grid('#778') + P('M3 10l6-4v3h6v3H9v3z', '#3a66c0', '#fff', .5), g6: grid('#778') + P('M15 10L9 6v3H3v3h6v3z', '#3a66c0', '#fff', .5),
  g7: P('M3 3h6q6 3 2 9l-2 2v-4q3-3-1-4H3z', '#4c6488', '#24344c', .8), g8: P('M14 3H8Q3 8 8 14h5v-3H9Q7 8 10 6h4z', '#4c6488', '#24344c', .8), g9: P('M4 13Q1 8 6 4M14 5q3 5-2 9', 'none', '#a4b4d0', 2.4) + P('M4 2h5v5zM14 16H9v-5z', '#a4b4d0'),
  g10: grid('#b0bad0') + P('M9 5v9M4.500 9.500h9', 'none', '#8ca4d8', 3), g11: grid('#b0bad0') + P('M6 6l6 7M12 6l-6 7', 'none', '#8ca4d8', 2.5), g12: grid('#b0bad0') + P('M9 5v3M9 11v3', 'none', '#8ca4d8', 3), g13: grid('#b0bad0') + P('M4 4l10 11M14 4L4 15', 'none', '#8ca4d8', 2),
  g14: P('M1 4h8M1 8h6M1 12h8', 'none', '#777', 2) + P('M8 3l9 12M17 3L8 15', 'none', '#c01010', 2.4), g15: P('M1 9l5-4v3h4v2H6v3z', '#d02020') + R(11, 7, 6, 5, '#ccc', '#777') + P('M9 4h5M9 14h5', 'none', '#aaa'), g16: P('M17 9l-5-4v3H8v2h4v3z', '#d02020') + P('M1 4h7M1 9h6M1 14h7', 'none', '#999', 2),
  g17: grid('#777', '#fff') + P('M2 3h14v5H2z', '#fff27a', '#776600', .8), g18: grid('#7880b8') + P('M2 3h14v3H2z', '#6068b8'), g19: grid('#b8b890', '#fffff0') + P('M12 3v8H6l4 4', 'none', '#d8c050', 2),
  g20: R(3.5, 4.5, 11, 12, '#fff', '#444') + P('M5 11.500h8M5 13.500h8', 'none', '#444') + hand, excel: R(1.5, 1.5, 15, 15, '#e8f4e4', '#187830') + R(2.5, 2.5, 13, 13, 'none', '#187830') + P('M5 5l8 8M13 5l-8 8', 'none', '#187830', 2.6),
  calc: R(2, 3, 14, 12, '#555', '#222') + R(3, 4, 12, 3, '#dfe8e4') + '<path d="M4 9.500h10M4 12.500h10" stroke="#eee" stroke-width="2" stroke-dasharray="2 1"/>', abeq: R(7.5, 1.5, 9, 6, '#fff', '#445') + P('M7 1h10v3H7z', '#445') + T(8, 16, 'ab=', 'mid'),
  fx: T(9, 14, 'fx', 'big'), fxx: T(11, 15, 'fx', 'big') + P('M1 1l7 7M8 1L1 8', 'none', '#e06a70', 2),
  book: P('M2 3q4-2 7 0 3-2 7 0v12q-4-2-7 0-3-2-7 0z', '#8c7c70', '#443a34') + P('M4 4q3-1 4 0v9q-2-1-5 0z', '#eee2d4'),
  IPE: prof(smallI, 'IPE'), 'HE-A': prof(smallI, 'HE-A'), 'HE-B': prof(smallI, 'HE-B'), 'HE-M': prof(smallI, 'HE-M'),
  QRO: prof('M5 1.500h8v8H5z', 'QRO'), RRO: prof('M7 1.500h4v8H7z', 'RRO'), RO: C(9, 5.5, 4, 'none', '#3a4a80') + T(9, 17, 'RO'), RD: C(9, 5.5, 4.5, '#3f5a96') + T(9, 17, 'RD'),
  L: prof('M6 1v8.500h8', 'L'), U: prof('M12 1.500H7v8h5', 'U'), IS: prof(smallI, 'IS', '#d01818'), REC: R(7, 1.5, 4, 8, '#888', '#445') + T(9, 17, 'REC'),
  lib1: P('M2 5l7-3h8l-6 4z', '#bbb', '#555') + P('M11 6l6-3v3l-7 4v6l-3 1', '#bbb', '#555') + P('M2 7h9M7 7v9', 'none', '#46649c', 2), lib2: P('M2 6l6-4h9v8l-6 5H2z', '#999', '#555') + R(2, 6, 9, 9, '#eee', '#aaa') + C(6.5, 10.5, 2, '#555'),
};

const svg = (body, cls = '', size = 18) => `<svg class="${cls}" viewBox="0 0 ${size} ${size}" aria-hidden="true">${body}</svg>`;

document.querySelectorAll('.toolgroup').forEach(group => {
  const parts = group.dataset.icons.split(' ').map(token => {
    if (token === '|') return '<span class="sep"></span>';
    if (token === '@combo') return '<label class="combo"><select aria-label="Lastfall"><option>LF1</option></select></label>';
    const on = token[0] === '*', slim = token[0] === '<', more = token.endsWith('+');
    const key = token.replace(/^[*<]|\+$/g, '');
    return `<button class="tool${on ? ' on' : ''}${slim ? ' slim' : ''}" aria-label="${key}">${svg(ICONS[key])}</button>` + (more ? '<span class="drop"></span>' : '');
  });
  const grip = group.classList.contains('sheet-tools') ? '' : '<span class="grip"></span>';
  group.innerHTML = grip + parts.join('');
});

// Navigator tree: level, expander (+ open to expand, - expanded), icon, label.
const folder = P('M1.500 3.500V2.500h5l1 1.500h7v10h-13z', '#c9a21a', '#7d6400', .8) + P('M2 5h12v8.500H2z', '#f7de5c') + P('M2 9h12v4.500H2z', '#ecce3c');
const opened = P('M1 3h5l1 1.500h7V13H2z', '#a88a18', '#6a5500', .8) + P('M0 6.500h11l4 7H3z', '#d2b02a', '#6a5500', .8);
const tee = P('M2.500 2.500h11v4h-3v8h-5v-8h-3z', '#a0a0a0', '#777');
const ibeam = P('M4 2.500h8M8 2.500v11M4 13.500h8', 'none', '#3c4c98', 1.4);
const dia = (c) => P('M4 9l4-3 5 1-3 4z', c, dd, .6);
const TI = {
  logo: P('M0 1h16v13H0z', '#1b2263') + P('M0 10h16M5.500 3v11M1 9.500L5.500 3l3 4 2-4L15 9.500', 'none', '#fff'),
  doc: P('M5.500 .5h7l3 3v12h-10z', '#eee', '#777') + P('M0 7l5-4 6 2-3 6-4 1z', '#5e8fc8', '#2a5080', .8), f: folder, o: opened, T: tee, I: ibeam,
  kn: folder + R(7, 8, 2, 2, '#d00'), li: folder + P('M4 13l8-8', 'none', '#222') + R(11, 4, 2, 2, '#d00') + R(3, 12, 2, 2, '#d00'),
  ma: folder + R(4, 5, 3, 3, '#d22') + R(8, 5, 4, 3, '#3a66c0') + R(6, 9, 5, 4, '#2a9a50'), fl: folder + dia('#6a98e0'), vo: folder + P('M5 6l4-1 4 1-1 6-5 1z', '#6a98d0', dd, .7),
  of: folder + R(4, 5.5, 8, 7, '#7fa8dc', dd) + R(6.5, 7.5, 3, 3, '#fff', dd), kl: folder + R(7, 3, 2, 2, '#d00') + P('M7 6h2l1 4h2v3H4v-3h2z', '#2a8a40'),
  ll: folder + P('M4 7h9', 'none', '#c03020') + P('M4 8h3v4H4zM9 8h3v4H9z', '#2a8a40'), fla: folder + P('M4 6l8 1-2 6-4-1z', '#2a7a50', '#223', .7), lg: folder + dia('#fff'), vd: folder + dia('#5a88c8'), or: folder + dia('#c06090'),
  qu: folder + P('M8 5h5v7l-5 2z', '#5a78d8') + P('M3 5h4M5 5v8M3 13h4', 'none', '#c01818', 1.3), se: folder + P('M4 8h7M4 6v5', 'none', '#555', 1.3) + R(4, 7, 2, 2, '#d00'),
  sx: folder + P('M4 12l8-7M6 13l6-6', 'none', '#775', 1.5) + R(11, 4, 2, 2, '#d00'), st: folder + P('M4 13l8-8', 'none', '#667', 2) + C(8, 9, 1, '#fff'), sb: folder + P('M4 13l8-8', 'none', '#666', 2),
  ri: folder + dia('#bbb'), be: folder + P('M3 7h10M5 8v4M8 8v4M11 8v4', 'none', '#2a8a40', 1.5) + R(3, 6, 2, 2, '#d00') + R(11, 6, 2, 2, '#d00'), sn: folder + P('M8 3v11', 'none', '#555', 2) + R(7, 8, 2, 2, '#d00'), ss: folder + P('M4 12l4-6 3 6M9 6l3-1', 'none', '#b03020', 1.3),
  du: folder + C(8, 9, 3, '#5a88c8', '#245') + P('M5 9h6', 'none', '#fff'), fe: folder + P('M4 6h8v7H4zM4 9h8M8 6v7', '#bcd0ee', '#335', .9),
  lf: P('M0 14.500h15', 'none', '#222', 1.5) + P('M11 4v6', 'none', '#3a66c0', 3) + P('M8 9h6l-3 4z', '#3a66c0'),
  lk: P('M.5 1.500h5v3h-5zM.5 11.500h5v3h-5z', '#fff', '#222') + P('M7 3c4 0 4 1 5 3M7 13c4 0 4-1 5-3', 'none', '#222', 1.3) + R(10.5, 6.5, 5, 3, '#18c828', '#064'),
  ek: P('M.5 1.500h5v3h-5zM.5 11.500h5v3h-5z', '#fff', '#222') + P('M7 3c4 0 4 1 5 3M7 13c4 0 4-1 5-3', 'none', '#222', 1.3) + R(10.5, 6.5, 5, 3, '#5a9cf0', dd),
  bm: folder + P('M4 11l3-3 2 2 3-4M11 6h2', 'none', '#554', 1.2), km: folder + P('M4 12l4-4h5', 'none', '#554', 1.2), hl: folder + P('M5.500 4v10M10.500 4v10M3 6.500h10M3 11.500h10', 'none', '#a08000'),
  vi: folder + C(8, 9, 3.5, '#4a98d8', '#246') + C(8, 9, 1.2, '#fff'), hf: folder + P('M4 12l2-5h7l-2 5zM6 7V5h6', '#fff', '#555'), bar: P('M0 0h15v4H0z', '#8c8cf4'),
};
const TREE = `0 . logo RFEM|1 - doc Voutenstab*|2 - o Modelldaten|3 + kn Knoten|3 + li Linien|3 + ma Materialien|3 . fl Flächen|3 . vo Volumenkörper|3 . of Öffnungen|3 + kl Knotenlager|3 . ll Linienlager|3 . fla Flächenlager|3 . lg Liniengelenke|3 . vd Veränderliche Dicken|3 . or Orthotrope Flächen und Membranen|3 - qu Querschnitte|4 . T 1: PB 600/400/200/200; Beton C25/30|4 . T 2: PB 1200/400/200/200; Beton C25/30|4 . I 3: IPE 200; Baustahl S 235|4 . T 4: PB 700/400/200/200; Beton C25/30|4 . T 5: PB 800/400/200/200; Beton C25/30|4 . T 6: PB 900/400/200/200; Beton C25/30|4 . T 7: PB 1000/400/200/200; Beton C25/30|4 . T 8: PB 1100/400/200/200; Beton C25/30|3 . se Stabendgelenke|3 + sx Stabexzentrizitäten|3 . st Stabteilungen|3 + sb Stäbe|3 . ri Rippen|3 . be Stabbettungen|3 . sn Stabnichtlinearitäten|3 . ss Stabsätze|3 . du Durchdringungen der Flächen|3 . fe FE-Netzverdichtungen|3 . f Knotenfreigaben|2 - o Lastfälle und Kombinationen|3 + lf Lastfälle|3 . lk Lastkombinationen|3 . ek Ergebniskombinationen|2 + f Lasten|2 . f Ergebnisse|2 . f Schnitte|2 . f Glättungsbereiche|2 . f Ausdruckprotokolle|2 - o Hilfsobjekte|3 . bm Bemaßungen|3 + km Kommentare|3 . hl Hilfslinien|3 . hl Linienraster|3 . vi Visuelle Objekte|3 . hf Hintergrund-Folien|2 - o Zusatzmodule|3 - o Favoriten|4 . bar |4 . f |3 . f |2 . f `
  .split('|').map(line => { const [, level, box, icon, label] = line.match(/^(\d) (.) (\S+) (.*)$/); return { level: +level, box, icon, label }; });
const continues = (i, level) => {
  for (let j = i + 1; j < TREE.length && TREE[j].level >= level; j++) if (TREE[j].level === level) return true;
  return false;
};
document.getElementById('tree').innerHTML = TREE.map((row, i) => {
  let guides = '';
  for (let k = 1; k <= row.level; k++) {
    const own = k === row.level, more = continues(i, k);
    const box = own && row.box !== '.' ? `<b class="box${row.box === '+' ? ' plus' : ''}"></b>` : '';
    guides += `<span class="g${more ? ' line' : own ? ' half' : ''}${own ? ' elbow' : ''}">${box}</span>`;
  }
  const white = /^[TI]$/.test(row.icon) ? ' white' : '';
  return `<li role="treeitem" class="${row.level === 1 ? 'bold' : ''}">${guides}${svg(TI[row.icon], 'icon' + white, 16)}${row.label}</li>`;
}).join('');

// Cross-section table.
const DATA = [
  ['#6699ff', 'PB 600/400/200/200', 1, '203368.54 493333.35 133333.34 1600.00 1063.46 1068.75 0.00 0.00 400.0 600.0'],
  ['#f5c400', 'PB 1200/400/200/200', 1, '363787.07 3750476.19 173333.34 2800.00 1644.00 2055.21 0.00 0.00 400.0 1200.0'],
  ['#b87070', 'IPE 200', 2, '6.98 1943.00 142.40 28.48 14.22 10.34 0.00 0.00 100.0 200.0'],
  ['#76b900', 'PB 700/400/200/200', 1, '230069.46 779444.48 140000.00 1800.00 0.00 0.00 0.00 0.00 400.0 700.0'],
  ['#ff0000', 'PB 800/400/200/200', 1, '256937.12 1154666.70 146666.68 2000.00 0.00 0.00 0.00 0.00 400.0 800.0'],
  ['#8888ff', 'PB 900/400/200/200', 1, '283581.53 1629242.47 153333.34 2200.00 0.00 0.00 0.00 0.00 400.0 900.0'],
  ['#966426', 'PB 1000/400/200/200', 1, '310272.72 2213333.40 160000.00 2400.00 0.00 0.00 0.00 0.00 400.0 1000.0'],
  ['#2f5d00', 'PB 1100/400/200/200', 1, '336915.56 2917051.39 166666.68 2600.00 0.00 0.00 0.00 0.00 400.0 1100.0'],
  null, null,
];
const calculated = [0, 1, 2, 3, 6];
document.getElementById('rows').innerHTML = DATA.map((row, i) => {
  const head = `<tr><th class="${i === 4 ? 'sel' : ''}">${i + 1}</th>`;
  if (!row) return head + '<td></td>'.repeat(8) + '<td class="calc"></td>' + '<td></td>'.repeat(3) + '</tr>';
  const [color, name, mat, values] = row;
  return head
    + `<td class="name"><div class="cell"><i style="background:${color}"></i>${svg(name[0] === 'P' ? tee : ibeam, '', 16)}<span>${name}</span></div></td>`
    + `<td class="mat"><div class="cell"><i style="background:${mat === 2 ? '#6666ff' : '#a0a0a0'}"></i><span class="${i === 4 ? 'focus' : ''}">${mat}</span></div></td>`
    + values.split(' ').map((v, c) => `<td class="${calculated.includes(c) ? 'calc' : ''}">${v}</td>`).join('') + '</tr>';
}).join('');

// Model view: cross-section ribs, numbered nodes and axis triads.
const NODES = [[1, 570, 706, 554, 661], [3, 696, 642, 677, 590], [4, 822, 578, 801, 519], [5, 947, 513, 925, 447], [6, 1072, 449, 1048, 376], [7, 1197, 384, 1172, 304], [2, 1322, 320, 1296, 232]];
document.getElementById('ribs').innerHTML = NODES.map(([n, x, y, tx, ty]) => {
  const end = n === 1, k = (y - ty) / 80, top = Math.round(22 + 10 * k);
  const dark = end ? '#d01818' : '#9c5c5c', light = end ? '#e01c1c' : '#bc8080';
  return P(`M${tx} ${ty}l18 14-6 8-5-3-4-9z`, dark)
    + P(`M${tx + 18} ${ty + 14}l3 14-4-2-6 4-3-12z`, light)
    + P(`M${tx + 10} ${ty + top}l7-2L${x + 2} ${y - 3}l5 10-8-6z`, light)
    + P(`M${tx + 15} ${ty + Math.round(10 + 32 * k)}L${x} ${y - 2}`, 'none', '#e8dcdc', 1.2);
}).join('');
document.getElementById('nodes').innerHTML = NODES.map(([n, x, y]) =>
  C(x, y, 1.8, '#f00') + R(x + 2, y - 15, 9, 14, '#000') + `<text class="node-label" x="${x + 4}" y="${y - 4}">${n}</text>`).join('');
document.getElementById('triads').innerHTML = [[420, 693], [1322, 475]].map(([x, y]) =>
  P(`M${x} ${y}l16 12`, 'none', '#f00', 2) + P(`M${x + 22} ${y + 16}l-9-3 4-5z`, '#b00000')
  + P(`M${x} ${y}l-26 8`, 'none', '#0f0', 2) + P(`M${x - 35} ${y + 11}l9-6 1 5z`, '#00b000')
  + P(`M${x} ${y}v27`, 'none', '#0ff', 2) + P(`M${x} ${y + 37}l-3-10h6z`, '#0aa')
  + `<g font-size="9"><text x="${x - 44}" y="${y + 17}" fill="#0f0">Y</text><text x="${x + 24}" y="${y + 25}" fill="#e00">X</text><text x="${x - 2}" y="${y + 48}" fill="#0ff">Z</text></g>`).join('');
```
